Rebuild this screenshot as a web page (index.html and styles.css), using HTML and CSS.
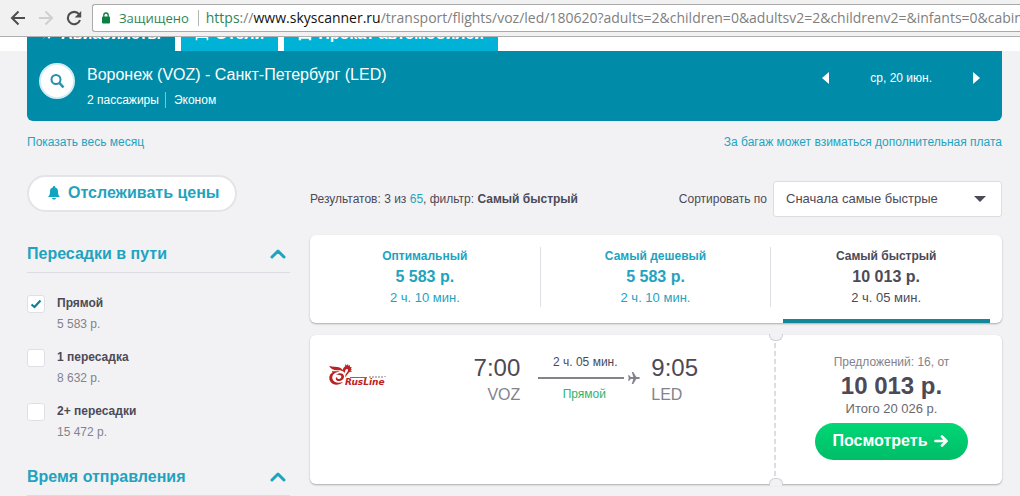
FILE: index.html
```html
<!DOCTYPE html>
<html lang="ru">
<head>
<meta charset="utf-8">
<meta name="viewport" content="width=device-width, initial-scale=1">
<title>Воронеж (VOZ) - Санкт-Петербург (LED)</title>
<link rel="stylesheet" href="styles.css">
</head>
<body>
<div class="browser-bar">
  <button class="nav-button" type="button" aria-label="Назад"><svg width="16" height="16" viewBox="0 0 16 16" fill="none" stroke="#4e4e4e" stroke-width="2"><path d="M15 8H2M8.500 1.500 2 8l6.500 6.500"/></svg></button>
  <button class="nav-button" type="button" aria-label="Вперёд" disabled><svg width="16" height="16" viewBox="0 0 16 16" fill="none" stroke="#cfcfcf" stroke-width="2"><path d="M1 8h13M7.500 1.500 14 8l-6.500 6.500"/></svg></button>
  <button class="nav-button" type="button" aria-label="Обновить"><svg width="16" height="16" viewBox="0 0 16 16"><path d="M13 4.200A6.200 6.200 0 1 0 14 10" fill="none" stroke="#4e4e4e" stroke-width="2.100"/><path d="M15.200 1v6.500H8.700z" fill="#4e4e4e"/></svg></button>
  <div class="address">
    <svg class="lock" width="8" height="12" viewBox="0 0 8 12"><rect y="4.500" width="8" height="7" rx="1" fill="#0b8043"/><path d="M1.800 5V3.200a2.200 2.200 0 0 1 4.400 0V5" fill="none" stroke="#0b8043" stroke-width="1.300"/></svg>
    <span class="secure">Защищено</span>
    <span class="url"><span class="scheme">https</span>://<span class="host">www.skyscanner.ru</span>/transport/flights/voz/led/180620?adults=2&amp;children=0&amp;adultsv2=2&amp;childrenv2=&amp;infants=0&amp;cabinclass</span>
  </div>
</div>

<nav class="product-nav">
  <a class="product product-current" href="#"><svg width="14" height="14" viewBox="0 0 18 18" fill="#fff"><path d="m2 16 4-5-5-3 2-1 5 1 5-6c2-2 4-1 2 2l-5 5 2 5-2 1-3-4z"/></svg>Авиабилеты</a>
  <a class="product" href="#"><svg width="14" height="14" viewBox="0 0 18 18" fill="none" stroke="#fff" stroke-width="2"><path d="M2 3v14M2 13h14v4M5 9h11v4"/></svg>Отели</a>
  <a class="product" href="#"><svg width="14" height="14" viewBox="0 0 18 18" fill="#fff"><path d="m1 9 3-6h10l3 6v8h-3v-2H4v2H1z"/></svg>Прокат автомобилей</a>
</nav>

<div class="page">
  <header class="search">
    <button class="search-button" type="button" aria-label="Изменить поиск"><svg width="16" height="16" viewBox="0 0 16 16" fill="none" stroke="#2592aa" stroke-width="2"><circle cx="7" cy="6.500" r="4.500"/><path d="m10.500 10 4 4.500" stroke-width="2.600"/></svg></button>
    <div class="search-info">
      <h1 class="route">Воронеж (VOZ) - Санкт-Петербург (LED)</h1>
      <p class="details"><span class="passengers">2 пассажиры</span><span>Эконом</span></p>
    </div>
    <div class="date-nav">
      <button class="date-button" type="button" aria-label="Предыдущий день"><svg width="7" height="12" viewBox="0 0 7 12" fill="#fff"><path d="M7 0v12L0 6z"/></svg></button>
      <span class="date">ср, 20 июн.</span>
      <button class="date-button" type="button" aria-label="Следующий день"><svg width="7" height="12" viewBox="0 0 7 12" fill="#fff"><path d="M0 0v12l7-6z"/></svg></button>
    </div>
  </header>

  <div class="links">
    <a href="#">Показать весь месяц</a>
    <a href="#">За багаж может взиматься дополнительная плата</a>
  </div>

  <div class="columns">
    <aside class="filters">
      <button class="track" type="button"><svg width="12" height="14" viewBox="0 0 12 14" fill="#12a5c2"><path d="M6 0c.8 0 1 .6 1 1.200C9.200 1.800 10 3.500 10 5.500c0 3 .6 4 2 5.500H0c1.400-1.500 2-2.500 2-5.500C2 3.500 2.800 1.800 5 1.200 5 .6 5.200 0 6 0zM4 12h4c-.2 1-1 1.500-2 1.500S4.200 13 4 12z"/></svg>Отслеживать цены</button>

      <section>
        <h2 class="filter-title"><button class="filter-toggle" type="button">Пересадки в пути<svg width="16" height="10" viewBox="0 0 16 10" fill="none" stroke="#1fa3bf" stroke-width="3" stroke-linecap="round" stroke-linejoin="round"><path d="m2 8 6-6 6 6"/></svg></button></h2>
        <div class="options">
          <div class="option"><input class="check" type="checkbox" id="direct" checked><label for="direct"><b>Прямой</b><span class="from">5 583 р.</span></label></div>
          <div class="option"><input class="check" type="checkbox" id="one"><label for="one"><b>1 пересадка</b><span class="from">8 632 р.</span></label></div>
          <div class="option"><input class="check" type="checkbox" id="more"><label for="more"><b>2+ пересадки</b><span class="from">15 472 р.</span></label></div>
        </div>
      </section>
      <section>
        <h2 class="filter-title"><button class="filter-toggle" type="button">Время отправления<svg width="16" height="10" viewBox="0 0 16 10" fill="none" stroke="#1fa3bf" stroke-width="3" stroke-linecap="round" stroke-linejoin="round"><path d="m2 8 6-6 6 6"/></svg></button></h2>
      </section>
    </aside>

    <main class="results">
      <div class="results-bar">
        <p class="summary">Результатов: 3 из <a href="#">65</a>, фильтр: <b>Самый быстрый</b></p>
        <label for="sort">Сортировать по</label>
        <div class="select-wrap">
          <select class="sort" id="sort"><option>Сначала самые быстрые</option></select>
          <svg class="select-arrow" width="12" height="6" viewBox="0 0 12 6" fill="#4c4a57"><path d="M0 0h12L6 6z"/></svg>
        </div>
      </div>

      <div class="card modes">
        <button class="mode" type="button"><b>Оптимальный</b><strong>5 583 р.</strong><span>2 ч. 10 мин.</span></button>
        <button class="mode" type="button"><b>Самый дешевый</b><strong>5 583 р.</strong><span>2 ч. 10 мин.</span></button>
        <button class="mode mode-current" type="button"><b>Самый быстрый</b><strong>10 013 р.</strong><span>2 ч. 05 мин.</span></button>
      </div>

      <article class="card ticket">
        <div class="flight">
          <svg class="airline" role="img" aria-label="RusLine" width="60" height="24" viewBox="0 0 60 24">
            <g fill="#bb2222">
              <path d="M1 3c4 1.200 9-.2 13 3l2 3c-2-1.500-4-2-6-1.800C6 7.500 3.500 6.500 1 3z"/>
              <path d="M4 8c3 .6 5-.2 8 .5-6 .8-8.500 4-7.500 7.500C5.500 19.500 10 20.500 15 19c-4 4-11 3.500-13-1-1.500-3.500-.5-7 2.500-8.500z"/>
              <path d="M8 12c3-3 8-2 8 1.500 0 3-3 5-6 4.500-2.500-.5-3-3-1-4 0 1.500 1 2.300 2.500 2 2-.4 2.500-2.700 1-3.700C11.300 11.500 9.500 11.500 8 12z"/>
              <path d="M15 8c-.5-3 1.500-5 4-5 2.800 0 4.500 2 3.500 4l1.500 1.500-2.500.5c-1.500 2-3 3-4 5.500-.5-2 0-3.500 1.500-5 1.500-1.500 1.500-3.500 0-3.500S17 7 17 10z"/>
              <path d="M17 3l.5-2 1 1.500L20 1l.5 2L22 2v2l2 .2-1.500 1.300 2 .8-3 .7z"/>
            </g>
            <path d="M22 14.500h17" stroke="#a35a60" stroke-width="1"/>
            <path d="M41 13.500h17M41 14.500h15" stroke="#b09aa0" stroke-width=".7" stroke-dasharray="2 1"/>
            <text x="17" y="22" class="airline-name">RusLine</text>
          </svg>
          <div class="stop stop-from"><span class="time">7:00</span><span class="code">VOZ</span></div>
          <div class="leg">
            <span class="duration">2 ч. 05 мин.</span>
            <span class="track-line"><svg width="12" height="12" viewBox="0 0 12 12" fill="#83828d"><path d="M0 3.200h1.200L2.700 5h2.600L3.800 0h1.500l3 5h2.500c1.600.3 1.600 1.700 0 2H8.300l-3 5H3.800l1.500-5H2.700L1.200 8.800H0L.8 6z"/></svg></span>
            <span class="direct">Прямой</span>
          </div>
          <div class="stop"><span class="time">9:05</span><span class="code">LED</span></div>
        </div>
        <div class="offer">
          <span class="offers">Предложений: 16, от</span>
          <strong class="price">10 013 р.</strong>
          <span class="total">Итого 20 026 р.</span>
          <button class="view" type="button">Посмотреть<svg width="14" height="12" viewBox="0 0 14 12" fill="none" stroke="#fff" stroke-width="2.600" stroke-linecap="round" stroke-linejoin="round"><path d="M1.500 6h11M8 1.500 12.500 6 8 10.500"/></svg></button>
        </div>
      </article>
    </main>
  </div>
</div>
</body>
</html>
```
FILE: styles.css
```css
* { box-sizing: border-box; }
body {
  margin: 0;
  background: #f2f2f5;
  color: #4c4a57;
  font: 12px/16px "Liberation Sans", Arial, sans-serif;
}
h1, h2, p { margin: 0; font-weight: normal; }
a { color: #1fa3bf; text-decoration: none; }
button { margin: 0; padding: 0; border: 0; background: none; color: inherit; font: inherit; cursor: pointer; }
svg { display: block; flex: none; }

/* Browser toolbar */
.browser-bar {
  display: flex;
  align-items: center;
  gap: 12px;
  height: 37px;
  padding-left: 10px;
  border-bottom: 1px solid #b0b0b0;
  background: #f1f1f2;
  overflow: hidden;
}
.address {
  display: flex;
  flex: 1;
  align-items: center;
  min-width: 0;
  height: 28px;
  margin-left: -2px;
  padding-left: 9px;
  border: 1px solid #aaa;
  border-right: 0;
  border-radius: 3px 0 0 3px;
  background: #fff;
  color: #808080;
  font: 14px/20px "Open Sans", "Noto Sans", sans-serif;
  white-space: nowrap;
  overflow: hidden;
}
.secure {
  margin: 0 7px 0 9px;
  padding-right: 9px;
  border-right: 1px solid #b5b5b5;
  font-size: 13px;
  line-height: 16px;
}
.secure, .scheme { color: #2f8555; }
.host { color: #111; }

/* Product navigation, scrolled under the toolbar */
.product-nav {
  display: flex;
  align-items: flex-end;
  gap: 6px;
  height: 14px;
  padding-left: 27px;
  background: #fff;
  overflow: hidden;
}
.product {
  display: flex;
  align-items: center;
  gap: 6px;
  padding: 8px 14px 7px;
  background: #00b2d6;
  color: #fff;
  font-size: 16px;
  line-height: 20px;
  font-weight: bold;
  white-space: nowrap;
}
.product-current { background: #008ca8; }

/* Search summary */
.page { padding: 0 18px 0 27px; }
.search {
  display: flex;
  align-items: flex-start;
  gap: 12px;
  padding: 12px 22px 13px 12px;
  border-radius: 0 0 6px 6px;
  background: #008ca8;
  color: #fff;
}
.search-button {
  display: grid;
  place-items: center;
  width: 36px;
  height: 36px;
  border: 2px solid #d2edf4;
  border-radius: 50%;
  background: #fff;
}
.search-info { flex: 1; }
.route { font-size: 16px; line-height: 24px; }
.details { display: flex; padding-top: 5px; }
.passengers { margin-right: 8px; padding-right: 6px; border-right: 1px solid #7cc4d2; }
.date-nav { display: flex; align-items: center; gap: 41px; padding-top: 7px; }
.links { display: flex; justify-content: space-between; padding: 13px 0 25px; }

.columns { display: grid; grid-template-columns: 263px 1fr; gap: 20px; }

/* Filters */
.track {
  display: flex;
  align-items: center;
  gap: 8px;
  height: 37px;
  margin-bottom: 29px;
  padding: 0 15px 2px 19px;
  border: 2px solid #e4e3e8;
  border-radius: 19px;
  background: #fff;
  color: #1fa3bf;
  font-size: 16px;
  font-weight: bold;
}
.filter-title { border-bottom: 1px solid #dddce3; }
.filter-toggle {
  display: flex;
  align-items: center;
  justify-content: space-between;
  width: 100%;
  height: 31px;
  padding: 0 4px 6px 0;
  color: #1fa3bf;
  font-size: 16px;
  line-height: 20px;
  font-weight: bold;
}
.options { display: grid; gap: 16px; padding: 22px 0 23px; }
.option { display: flex; gap: 12px; }
.option label { display: grid; gap: 5px; line-height: 16px; }
.from { color: #83828d; line-height: 17px; }
.check {
  appearance: none;
  width: 18px;
  height: 18px;
  margin: 0;
  border: 1px solid #e0dfe5;
  border-radius: 3px;
  background: #fff;
}
.check:checked {
  background: #fff url("data:image/svg+xml,%3Csvg xmlns='http://www.w3.org/2000/svg' viewBox='0 0 16 16'%3E%3Cpath d='M3.500 8.500l3 2.500L12.500 4.500' fill='none' stroke='%23108096' stroke-width='2.200'/%3E%3C/svg%3E") center / 16px no-repeat;
}

/* Results */
.results-bar { display: flex; align-items: center; gap: 6px; padding: 6px 0 18px; }
.summary { flex: 1; }
.select-wrap { position: relative; width: 229px; }
.sort {
  appearance: none;
  display: block;
  width: 100%;
  height: 36px;
  padding: 0 30px 0 12px;
  border: 1px solid #dddce3;
  border-radius: 3px;
  background: #fff;
  color: #4c4a57;
  font: 13px/20px "Liberation Sans", Arial, sans-serif;
}
.select-arrow { position: absolute; top: 15px; right: 16px; pointer-events: none; }
.card {
  border-radius: 6px;
  background: #fff;
  box-shadow: 0 1px 2px rgba(0, 0, 0, .3);
}
.modes { display: grid; grid-template-columns: repeat(3, 1fr); height: 88px; margin-bottom: 12px; }
.mode {
  position: relative;
  display: grid;
  align-content: start;
  padding: 12px 1px 12px 0;
  color: #1fa3bf;
  font-size: 13px;
  line-height: 18px;
}
.mode b { font-size: 12px; }
.mode strong { font-size: 16px; line-height: 24px; }
.mode + .mode::before {
  content: "";
  position: absolute;
  top: 12px;
  bottom: 16px;
  left: -1px;
  border-left: 1px solid #e0dfe5;
}
.mode-current { color: #4c4a57; }
.mode-current::after {
  content: "";
  position: absolute;
  right: 12px;
  bottom: 0;
  left: 12px;
  height: 4px;
  background: #13879a;
}

.ticket { display: grid; grid-template-columns: 1fr 228px; height: 149px; }
.flight { display: flex; align-items: flex-start; padding: 19px 76px 0 18px; }
.airline { margin-top: 9px; }
.airline-name { fill: #bb2222; font: italic bold 9px "DejaVu Sans", sans-serif; }
.stop { display: grid; }
.stop-from { flex: 1; text-align: right; }
.time { font-size: 24px; line-height: 28px; }
.code { color: #83828d; font-size: 16px; line-height: 26px; }
.leg { display: grid; width: 102px; margin: 0 11px 0 18px; }
.duration, .direct { width: 92px; text-align: center; line-height: 16px; }
.duration { width: 94px; }
.direct { color: #2bb573; }
.track-line { display: flex; align-items: center; gap: 4px; height: 16px; }
.track-line::before { content: ""; flex: 1; height: 2px; background: #83828d; }
.offer {
  position: relative;
  display: flex;
  flex-direction: column;
  align-items: center;
  padding: 19px 0 0 7px;
  background: repeating-linear-gradient(#dddce3 0 5px, transparent 5px 8px) left top / 2px 100% no-repeat;
}
.offer::before, .offer::after {
  content: "";
  position: absolute;
  left: -5px;
  width: 12px;
  height: 6px;
  border: 1px solid #d0cfd6;
  background: #f2f2f5;
}
.offer::before { top: -1px; border-top: 0; border-radius: 0 0 6px 6px; }
.offer::after { bottom: -2px; height: 7px; border-bottom: 0; border-radius: 6px 6px 0 0; }
.offers { color: #83828d; }
.price { font-size: 24px; line-height: 31px; }
.total { color: #696873; font-size: 13px; }
.view {
  display: flex;
  align-items: center;
  gap: 7px;
  height: 37px;
  margin-top: 6px;
  padding: 0 20px 2px 18px;
  border-radius: 19px;
  background: linear-gradient(#00d775, #00bd68);
  color: #fff;
  font-size: 16px;
  font-weight: bold;
}
```
